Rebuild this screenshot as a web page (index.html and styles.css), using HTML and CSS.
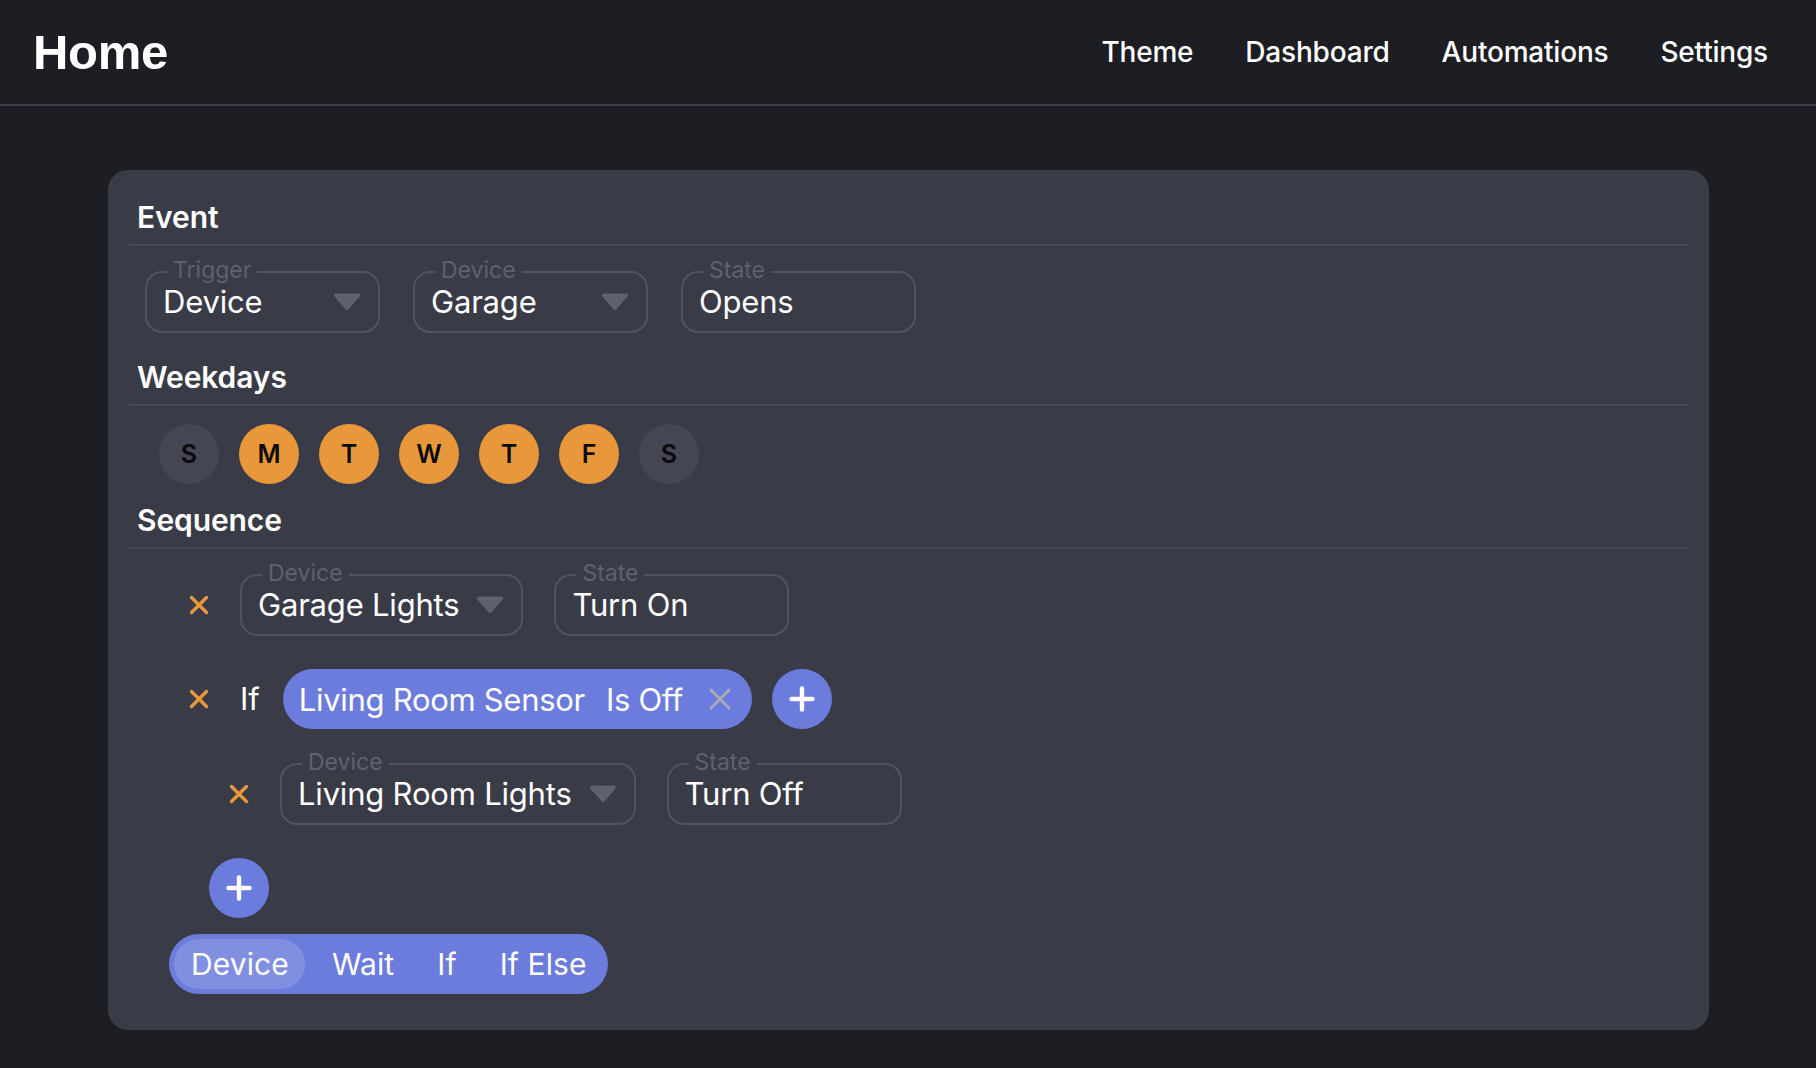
FILE: index.html
```html
<!DOCTYPE html>
<html lang="en">
<head>
<meta charset="utf-8">
<title>Home</title>
<link rel="stylesheet" href="styles.css">
</head>
<body>
<header class="topbar">
  <div class="brand">Home</div>
  <nav class="nav">
    <a class="nav-link">Theme</a>
    <a class="nav-link">Dashboard</a>
    <a class="nav-link">Automations</a>
    <a class="nav-link">Settings</a>
  </nav>
</header>

<main class="card">
  <h2 class="section-title">Event</h2>
  <div class="field-row event-row">
    <div class="field">
      <span class="field-label">Trigger</span>
      <span class="field-value">Device</span>
      <svg class="caret" viewBox="0 0 28 18" width="28" height="18"><polygon points="3,2.5 25,2.5 14,15" /></svg>
    </div>
    <div class="field">
      <span class="field-label">Device</span>
      <span class="field-value">Garage</span>
      <svg class="caret" viewBox="0 0 28 18" width="28" height="18"><polygon points="3,2.5 25,2.5 14,15" /></svg>
    </div>
    <div class="field">
      <span class="field-label">State</span>
      <span class="field-value">Opens</span>
    </div>
  </div>

  <h2 class="section-title spaced-lg">Weekdays</h2>
  <div class="days">
    <span class="day">S</span>
    <span class="day on">M</span>
    <span class="day on">T</span>
    <span class="day on">W</span>
    <span class="day on">T</span>
    <span class="day on">F</span>
    <span class="day">S</span>
  </div>

  <h2 class="section-title spaced-sm">Sequence</h2>
  <div class="sequence">
    <div class="step">
      <button class="remove"><svg viewBox="0 0 20 20" width="20" height="20"><path d="M2.5 2.5 L17.5 17.5 M17.5 2.5 L2.5 17.5" /></svg></button>
      <div class="field">
        <span class="field-label">Device</span>
        <span class="field-value">Garage Lights</span>
        <svg class="caret" viewBox="0 0 28 18" width="28" height="18"><polygon points="3,2.5 25,2.5 14,15" /></svg>
      </div>
      <div class="field">
        <span class="field-label">State</span>
        <span class="field-value">Turn On</span>
      </div>
    </div>

    <div class="if-block">
      <div class="step">
        <button class="remove"><svg viewBox="0 0 20 20" width="20" height="20"><path d="M2.5 2.5 L17.5 17.5 M17.5 2.5 L2.5 17.5" /></svg></button>
        <span class="if-label">If</span>
        <div class="cond">
          <span>Living Room Sensor</span>
          <span>Is Off</span>
          <svg class="cond-x" viewBox="0 0 22 22" width="22" height="22"><path d="M2 2 L20 20 M20 2 L2 20" /></svg>
        </div>
        <button class="round-add"><svg viewBox="0 0 26 26" width="26" height="26"><path d="M13 2.5 V23.5 M2.5 13 H23.5" /></svg></button>
      </div>
      <div class="nested">
        <div class="step">
          <button class="remove"><svg viewBox="0 0 20 20" width="20" height="20"><path d="M2.5 2.5 L17.5 17.5 M17.5 2.5 L2.5 17.5" /></svg></button>
          <div class="field">
            <span class="field-label">Device</span>
            <span class="field-value">Living Room Lights</span>
            <svg class="caret" viewBox="0 0 28 18" width="28" height="18"><polygon points="3,2.5 25,2.5 14,15" /></svg>
          </div>
          <div class="field">
            <span class="field-label">State</span>
            <span class="field-value">Turn Off</span>
          </div>
        </div>
        <button class="round-add nested-add"><svg viewBox="0 0 26 26" width="26" height="26"><path d="M13 2.5 V23.5 M2.5 13 H23.5" /></svg></button>
      </div>
    </div>

    <div class="seg">
      <span class="seg-item active">Device</span>
      <span class="seg-item">Wait</span>
      <span class="seg-item">If</span>
      <span class="seg-item">If Else</span>
    </div>
  </div>
</main>
</body>
</html>
```

FILE: styles.css
```css
html, body {
  margin: 0;
  padding: 0;
}

body {
  background: #1d1e23;
  color: #ffffff;
  font-family: "Inter", "Noto Sans", sans-serif;
  min-height: 1068px;
}

.topbar {
  height: 104px;
  border-bottom: 2px solid #3b3d48;
  display: flex;
  align-items: center;
  justify-content: space-between;
  padding: 0 48px 0 33px;
}

.brand {
  font-family: "Liberation Sans", Arial, sans-serif;
  font-weight: 700;
  font-size: 49px;
  line-height: 1;
  letter-spacing: -0.3px;
}

.nav {
  display: flex;
  gap: 52px;
}

.nav-link {
  font-size: 28px;
  font-weight: 500;
  letter-spacing: -0.2px;
  color: #ffffff;
}

.card {
  display: block;
  margin: 64px 107px 0 108px;
  background: #393b47;
  border-radius: 20px;
  padding: 29px 20px 36px 21px;
}

.section-title {
  margin: 0;
  font-size: 30px;
  line-height: 36px;
  font-weight: 600;
  letter-spacing: -0.1px;
  padding: 0 0 9px 8px;
  border-bottom: 2px solid #464855;
}

.spaced-lg {
  margin-top: 26px;
}

.spaced-sm {
  margin-top: 18px;
}

.field-row {
  display: flex;
  gap: 33px;
}

.event-row {
  margin: 25px 0 0 16px;
}

.field {
  position: relative;
  box-sizing: border-box;
  height: 62px;
  min-width: 235px;
  display: flex;
  align-items: center;
  justify-content: space-between;
  gap: 17px;
  padding: 0 17px 0 16px;
  border: 2px solid #51535f;
  border-radius: 17px;
}

.field-label {
  position: absolute;
  top: -14px;
  left: 20px;
  padding: 0 6px;
  background: #393b47;
  font-size: 23px;
  line-height: 23px;
  color: #5e616f;
}

.field-value {
  font-size: 31px;
  line-height: 36px;
  color: #ffffff;
  letter-spacing: -0.2px;
  white-space: nowrap;
}

.caret {
  flex: none;
  fill: #5e616f;
  stroke: #5e616f;
  stroke-width: 4;
  stroke-linejoin: round;
}

.days {
  display: flex;
  gap: 20px;
  margin: 18px 0 0 30px;
}

.day {
  width: 60px;
  height: 60px;
  border-radius: 50%;
  background: #444653;
  color: #0a0a0d;
  display: flex;
  align-items: center;
  justify-content: center;
  font-size: 25px;
  font-weight: 600;
}

.day.on {
  background: #e8983a;
}

.sequence {
  display: flex;
  flex-direction: column;
  align-items: flex-start;
  padding: 25px 0 0 40px;
}

.step {
  display: flex;
  align-items: center;
  gap: 11px;
}

.if-block {
  display: flex;
  flex-direction: column;
  align-items: flex-start;
  margin-top: 33px;
}

.nested {
  display: flex;
  flex-direction: column;
  align-items: flex-start;
  padding-left: 40px;
  margin-top: 34px;
}

.step .field + .field {
  margin-left: 20px;
}

.remove {
  width: 60px;
  height: 40px;
  border: 0;
  padding: 0;
  background: none;
  display: flex;
  align-items: center;
  justify-content: center;
}

.remove svg {
  stroke: #e8983a;
  stroke-width: 3.4;
  stroke-linecap: round;
  fill: none;
}

.if-label {
  font-size: 31px;
  line-height: 36px;
  color: #ffffff;
  margin-right: 12px;
}

.cond {
  display: flex;
  align-items: center;
  height: 60px;
  box-sizing: border-box;
  padding: 0 21px 0 16px;
  gap: 21px;
  border-radius: 30px;
  background: #6b7cdc;
  font-size: 31px;
  letter-spacing: -0.3px;
  color: #ffffff;
  white-space: nowrap;
}

.cond-x {
  margin-left: 5px;
  stroke: #a8abb6;
  stroke-width: 2.8;
  stroke-linecap: round;
  fill: none;
}

.round-add {
  width: 60px;
  height: 60px;
  border-radius: 50%;
  border: 0;
  padding: 0;
  background: #6b7cdc;
  display: flex;
  align-items: center;
  justify-content: center;
  margin-left: 9px;
}

.round-add svg {
  stroke: #ffffff;
  stroke-width: 4.4;
  stroke-linecap: round;
  fill: none;
}

.nested-add {
  margin: 33px 0 0 0;
}

.seg {
  display: flex;
  gap: 10px;
  padding: 5px;
  margin-top: 16px;
  border-radius: 30px;
  background: #6b7cdc;
}

.seg-item {
  height: 50px;
  line-height: 50px;
  padding: 0 16px 0 17px;
  border-radius: 25px;
  font-size: 30px;
  letter-spacing: 0.1px;
  color: #ffffff;
}

.seg-item.active {
  background: rgba(255, 255, 255, 0.15);
}
```
